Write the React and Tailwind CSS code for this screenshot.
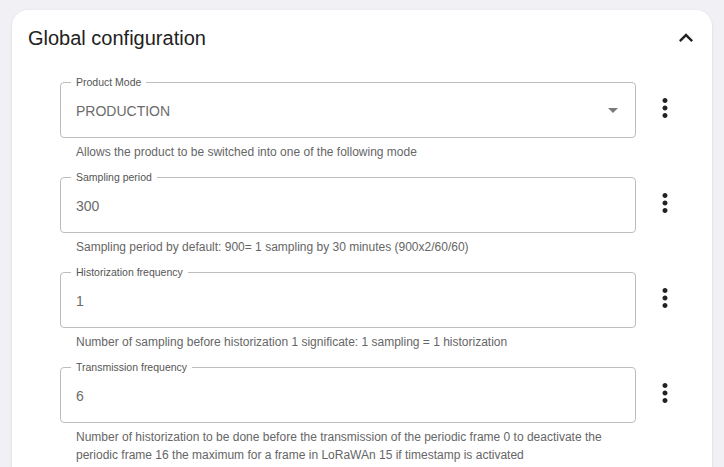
import React from "react";

const fields = [
  {
    label: "Product Mode",
    value: "PRODUCTION",
    select: true,
    help: "Allows the product to be switched into one of the following mode",
  },
  {
    label: "Sampling period",
    value: "300",
    help: "Sampling period by default: 900= 1 sampling by 30 minutes (900x2/60/60)",
  },
  {
    label: "Historization frequency",
    value: "1",
    help: "Number of sampling before historization 1 significate: 1 sampling = 1 historization",
  },
  {
    label: "Transmission frequency",
    value: "6",
    help: "Number of historization to be done before the transmission of the periodic frame 0 to deactivate the periodic frame 16 the maximum for a frame in LoRaWAn 15 if timestamp is activated",
  },
];

function MoreVert() {
  return (
    <svg width="30" height="30" viewBox="0 0 24 24" fill="#222">
      <path d="M12 8c1.1 0 2-.9 2-2s-.9-2-2-2-2 .9-2 2 .9 2 2 2zm0 2c-1.1 0-2 .9-2 2s.9 2 2 2 2-.9 2-2-.9-2-2-2zm0 6c-1.1 0-2 .9-2 2s.9 2 2 2 2-.9 2-2-.9-2-2-2z" />
    </svg>
  );
}

function Field({ field }) {
  return (
    <div className="flex flex-col">
      <div className="flex items-center">
        <div className="relative w-[576px] h-[56px] rounded-[4px] border border-[#bdbdbd] flex items-center pl-[15px] pr-[10px]">
          <span className="absolute left-[10px] -top-[8px] bg-white px-[5px] text-[10.5px] leading-[14px] text-[#555]">
            {field.label}
          </span>
          <span className="flex-1 pt-[2px] text-[14px] text-[#6b6b6b]">{field.value}</span>
          {field.select && (
            <svg width="24" height="24" viewBox="0 0 24 24" fill="#7a7a7a">
              <path d="M7 10l5 5 5-5z" />
            </svg>
          )}
        </div>
        <div className="ml-[14px] -mt-[5px]">
          <MoreVert />
        </div>
      </div>
      <p className="mt-[5px] pl-4 w-[576px] text-[12px] leading-[18px] text-[#666]">{field.help}</p>
    </div>
  );
}

export default function App() {
  return (
    <div
      className="min-h-screen bg-[#f0f0f5] pl-[12px] pr-[12px] pt-[10px]"
      style={{ fontFamily: '"Liberation Sans", Arial, sans-serif' }}
    >
      <div className="bg-white rounded-t-[16px] shadow-[0_1px_3px_rgba(0,0,0,0.12)] min-h-[470px]">
        <div className="flex items-center justify-between h-[56px] pl-4 pr-[12px]">
          <h2 className="text-[20px] text-[#222]">Global configuration</h2>
          <svg width="28" height="28" viewBox="0 0 24 24" fill="#222">
            <path d="M12 8l-6 6 1.41 1.41L12 10.83l4.59 4.58L18 14z" />
          </svg>
        </div>
        <div className="pl-[48px] mt-[16px] flex flex-col gap-[16px]">
          {fields.map((f) => (
            <Field key={f.label} field={f} />
          ))}
        </div>
      </div>
    </div>
  );
}
